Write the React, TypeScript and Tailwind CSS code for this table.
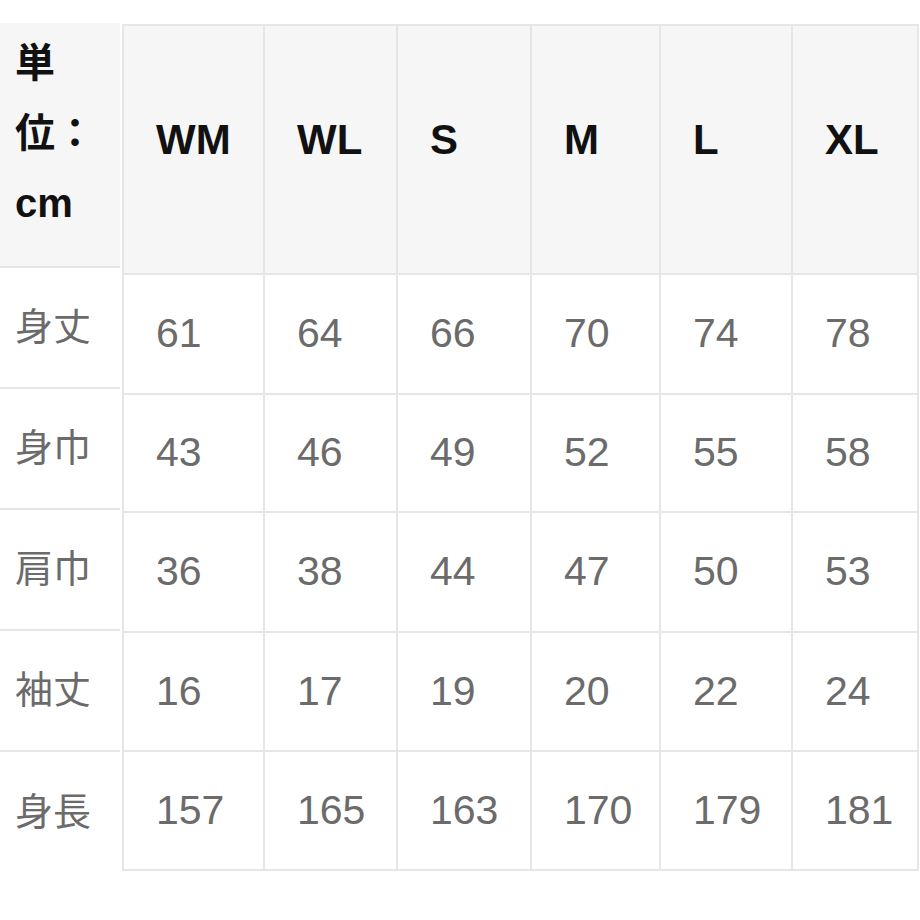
const sizes = ['WM', 'WL', 'S', 'M', 'L', 'XL'];

const rows: { label: string; values: number[] }[] = [
  { label: '身丈', values: [61, 64, 66, 70, 74, 78] },
  { label: '身巾', values: [43, 46, 49, 52, 55, 58] },
  { label: '肩巾', values: [36, 38, 44, 47, 50, 53] },
  { label: '袖丈', values: [16, 17, 19, 20, 22, 24] },
  { label: '身長', values: [157, 165, 163, 170, 179, 181] },
];

const font = { fontFamily: '"Liberation Sans", "Noto Sans CJK JP", sans-serif' };

export default function App() {
  return (
    <div className="w-[920px] h-[920px] bg-white pt-[23px] flex items-start" style={font}>
      {/* fixed first column */}
      <div className="w-[120px] flex flex-col shrink-0">
        <div className="h-[245px] bg-[#f6f6f6] border-b-2 border-[#e6e6e6] pl-[15px] pt-[5px] text-[40px] leading-[70px] font-bold text-[#111]">
          単<br />
          位：<br />
          cm
        </div>
        {rows.map((r, i) => (
          <div
            key={r.label}
            className={
              i === rows.length - 1
                ? 'h-[120px] flex items-center pl-[15px] text-[38px] text-[#6b6b6b]'
                : 'h-[121px] border-b-2 border-[#e6e6e6] flex items-center pl-[15px] text-[38px] text-[#6b6b6b]'
            }
          >
            {r.label}
          </div>
        ))}
      </div>

      {/* scrolling size table */}
      <div className="ml-[2px] mt-[1px] border-l-2 border-t-2 border-[#e6e6e6] grid grid-cols-[141px_133px_134px_129px_132px_126px] grid-rows-[249px_120px_118px_120px_119px_119px]">
        {sizes.map((s) => (
          <div
            key={s}
            className="bg-[#f6f6f6] border-r-2 border-b-2 border-[#e6e6e6] flex items-center pl-8 pb-5 text-[42px] font-bold text-[#111]"
          >
            {s}
          </div>
        ))}
        {rows.map((r) =>
          r.values.map((v, j) => (
            <div
              key={r.label + j}
              className="border-r-2 border-b-2 border-[#e6e6e6] flex items-center pl-8 text-[41px] text-[#6b6b6b]"
            >
              {v}
            </div>
          ))
        )}
      </div>
    </div>
  );
}
